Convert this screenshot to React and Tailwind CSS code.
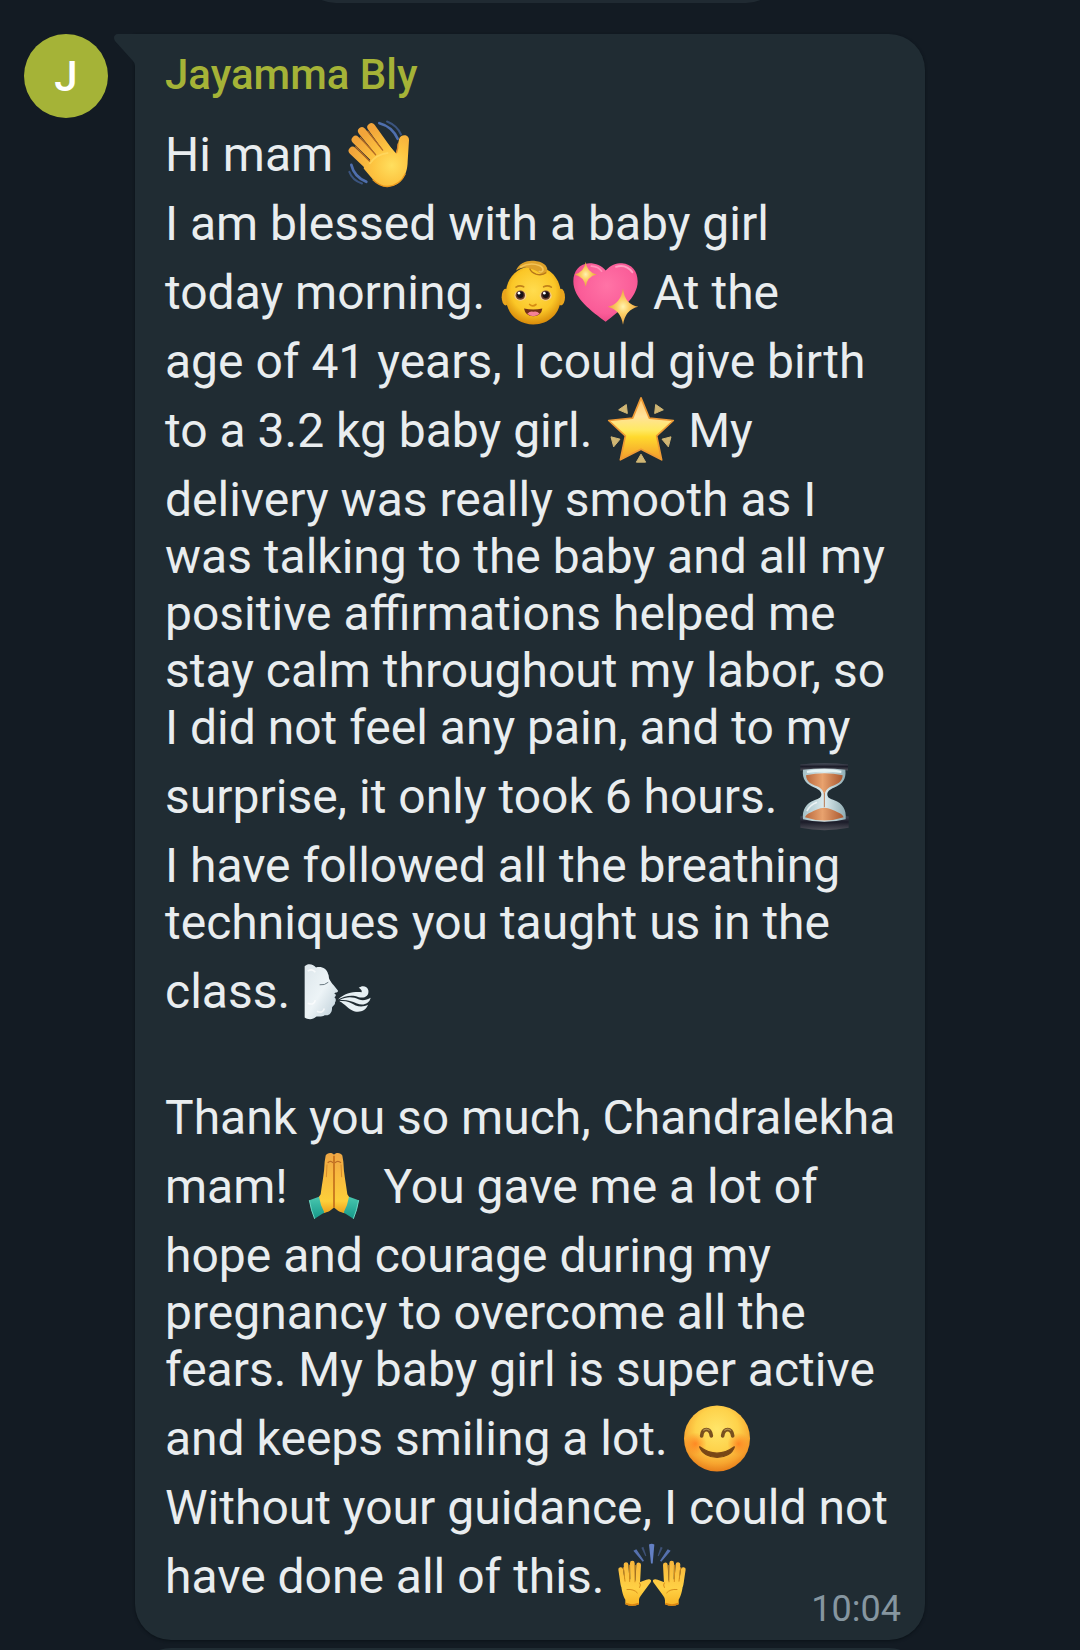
import React from 'react';

const EMOJI = 'inline-block h-[81px] w-[72px] align-[-24px]';

function Emoji({ label, viewBox, children }) {
  return (
    <svg className={EMOJI} viewBox={viewBox} role="img" aria-label={label}>
      {children}
    </svg>
  );
}

function WavingHand() {
  return (
    <Emoji label="waving hand" viewBox="45 24 216 216">
      <defs>
        <radialGradient id="wave-skin" gradientUnits="userSpaceOnUse" cx="185" cy="165" r="125">
          <stop offset="0" stopColor="#ffdf5e" />
          <stop offset="0.45" stopColor="#fdc440" />
          <stop offset="1" stopColor="#f2a43a" />
        </radialGradient>
      </defs>
      <g fill="none" strokeLinecap="round">
        <path d="M148 38Q187 48 203 85" stroke="#4f6fae" strokeWidth="8" />
        <path d="M171 33Q201 45 213 72" stroke="#3b547f" strokeWidth="6" />
        <path d="M64 163Q72 198 109 214" stroke="#4f6fae" strokeWidth="8" />
        <path d="M58 184Q67 209 96 219" stroke="#3b547f" strokeWidth="6" />
      </g>
      <g stroke="url(#wave-skin)" strokeWidth="24" strokeLinecap="round">
        <path d="M68 121L125 175" />
        <path d="M77 88L145 155" />
        <path d="M96 62L160 140" />
        <path d="M124 50L180 128" />
      </g>
      <path
        d="M103 165L172 100L198 128C203 113 204 98 207 87C211 70 238 70 237 89L233 152C232 197 211 228 171 228C145 228 127 206 101 174Z"
        fill="url(#wave-skin)"
      />
      <g fill="none" stroke="#b66b24" strokeWidth="4" strokeLinecap="round">
        <path d="M113 62L158 119" />
        <path d="M91 81L137 133" />
        <path d="M77 109L119 152" />
      </g>
      <path d="M199 128Q204 115 204 99" fill="none" stroke="#d8862c" strokeWidth="4" />
      <path d="M119 160Q137 131 175 127" fill="none" stroke="#ffdc66" strokeWidth="5" opacity="0.7" />
      <path d="M128 207Q150 229 173 228Q210 225 226 190" fill="none" stroke="#ea981e" strokeWidth="4" />
    </Emoji>
  );
}

function Baby() {
  return (
    <Emoji label="baby" viewBox="21 18 216 216">
      <defs>
        <radialGradient id="baby-face" gradientUnits="userSpaceOnUse" cx="130" cy="120" r="102">
          <stop offset="0" stopColor="#ffdc4f" />
          <stop offset="0.65" stopColor="#fbc727" />
          <stop offset="1" stopColor="#d88a0a" />
        </radialGradient>
      </defs>
      <ellipse cx="47" cy="140" rx="12" ry="25" fill="#e9a51d" />
      <ellipse cx="213" cy="140" rx="12" ry="25" fill="#e9a51d" />
      <path
        d="M130 47C180 47 213 84 213 136C213 190 176 222 130 222C84 222 47 190 47 136C47 84 80 47 130 47Z"
        fill="url(#baby-face)"
      />
      <path
        d="M78 60C88 36 112 29 132 31C156 33 174 45 172 60C170 72 150 74 144 64C139 60 128 56 118 53C104 48 92 52 78 60Z"
        fill="#dda12b"
      />
      <path d="M90 50Q120 34 148 45Q160 50 159 59Q155 68 146 62" fill="none" stroke="#f3c457" strokeWidth="5" />
      <path d="M119 54Q124 66 138 71Q157 76 169 66" fill="none" stroke="#b7761a" strokeWidth="4" />
      <g fill="none" stroke="#c1821a" strokeWidth="5" strokeLinecap="round">
        <path d="M78 110Q89 103 101 109" />
        <path d="M161 109Q173 103 184 110" />
      </g>
      <ellipse cx="91" cy="136" rx="18" ry="15" fill="#f4cf96" />
      <ellipse cx="167" cy="136" rx="18" ry="15" fill="#f4cf96" />
      <circle cx="91" cy="134" r="14" fill="#6b3f2a" />
      <circle cx="167" cy="134" r="14" fill="#6b3f2a" />
      <circle cx="91" cy="133" r="10" fill="#171016" />
      <circle cx="167" cy="133" r="10" fill="#171016" />
      <circle cx="87" cy="128" r="4" fill="#fff" />
      <circle cx="163" cy="128" r="4" fill="#fff" />
      <path d="M119 162Q128 170 138 162" fill="none" stroke="#d78c13" strokeWidth="5" strokeLinecap="round" />
      <path d="M102 174Q130 180 157 174Q154 197 130 197Q106 197 102 174Z" fill="#713016" />
      <path d="M112 190Q121 180 130 184Q140 180 149 190Q140 197 130 197Q119 197 112 190Z" fill="#f58197" />
    </Emoji>
  );
}

function SparklingHeart() {
  return (
    <Emoji label="sparkling heart" viewBox="236 18 216 216">
      <defs>
        <radialGradient id="heart-pink" gradientUnits="userSpaceOnUse" cx="350" cy="105" r="120">
          <stop offset="0" stopColor="#ff73a6" />
          <stop offset="0.7" stopColor="#fa5c98" />
          <stop offset="1" stopColor="#e64380" />
        </radialGradient>
        <radialGradient id="heart-spark">
          <stop offset="0" stopColor="#fff3b0" />
          <stop offset="0.4" stopColor="#fdd067" />
          <stop offset="1" stopColor="#e89f3a" />
        </radialGradient>
      </defs>
      <path
        d="M346 60C361 43 377 38 395 38C424 40 442 62 442 92C442 143 386 181 346 214C304 181 249 145 249 92C249 61 268 39 297 38C317 38 334 45 346 60Z"
        fill="url(#heart-pink)"
      />
      <path d="M377 49Q407 40 426 65" fill="none" stroke="#ffa0c2" strokeWidth="6" strokeLinecap="round" />
      <path d="M303 47Q324 48 334 62" fill="none" stroke="#ff94ba" strokeWidth="5" strokeLinecap="round" />
      <path d="M286 34Q289 65 319 72Q290 78 286 109Q282 79 253 72Q283 64 286 34Z" fill="url(#heart-spark)" />
      <path d="M398 114Q403 162 444 169Q405 177 398 223Q391 178 352 169Q391 161 398 114Z" fill="url(#heart-spark)" />
    </Emoji>
  );
}

function GlowingStar() {
  return (
    <Emoji label="glowing star" viewBox="12 12 216 216">
      <defs>
        <linearGradient id="star-fill" x1="0" y1="0" x2="0" y2="1">
          <stop offset="0" stopColor="#ffc56a" />
          <stop offset="0.3" stopColor="#ffe29a" />
          <stop offset="0.52" stopColor="#ffe962" />
          <stop offset="0.63" stopColor="#ffda2e" />
          <stop offset="1" stopColor="#f39a2c" />
        </linearGradient>
      </defs>
      <g fill="#d0b674" stroke="#d0b674" strokeWidth="3" strokeLinejoin="round">
        <path d="M79 42L56 58L82 69Z" />
        <path d="M167 42L190 58L164 69Z" />
        <path d="M33 139L60 146L41 169Z" />
        <path d="M213 139L186 146L205 169Z" />
        <path d="M123 191L109 215H137Z" />
      </g>
      <path
        d="M123 22L148 83L220 90L170 136L185 208L123 176L61 208L76 136L26 90L98 83Z"
        fill="url(#star-fill)"
        stroke="#ee9a35"
        strokeWidth="5"
        strokeLinejoin="round"
      />
    </Emoji>
  );
}

function Hourglass() {
  return (
    <Emoji label="hourglass" viewBox="26 30 216 216">
      <defs>
        <linearGradient id="glass-sand" x1="0" x2="1">
          <stop offset="0" stopColor="#b9683d" />
          <stop offset="0.45" stopColor="#e8a26e" />
          <stop offset="1" stopColor="#a95730" />
        </linearGradient>
        <linearGradient id="glass-body" x1="0" x2="1">
          <stop offset="0" stopColor="#a5c0c6" />
          <stop offset="0.5" stopColor="#dcebee" />
          <stop offset="1" stopColor="#8facb3" />
        </linearGradient>
        <linearGradient id="glass-cap" x1="0" y1="0" x2="0" y2="1">
          <stop offset="0" stopColor="#4b505d" />
          <stop offset="0.45" stopColor="#1b1c29" />
          <stop offset="1" stopColor="#4f5059" />
        </linearGradient>
      </defs>
      <path d="M60 42Q132 35 203 42V60Q132 54 60 60Z" fill="url(#glass-cap)" />
      <path d="M60 198Q132 190 205 198V232Q132 246 60 232Z" fill="url(#glass-cap)" />
      <path
        d="M68 58Q132 50 195 58C199 88 184 102 162 111C146 118 141 124 141 131C141 139 146 144 162 149C186 158 199 176 196 206Q132 222 68 206C65 176 78 158 102 149C118 144 123 139 123 131C123 124 118 118 102 111C80 102 64 88 68 58Z"
        fill="url(#glass-body)"
      />
      <path d="M77 74Q132 62 187 74C186 94 172 100 154 107C139 113 135 122 132 134C129 122 125 113 110 107C92 100 78 94 77 74Z" fill="url(#glass-sand)" />
      <path d="M74 200C80 188 96 184 110 177Q131 166 154 177C168 184 185 188 190 200Q132 220 74 200Z" fill="url(#glass-sand)" />
      <path d="M132 128V170" stroke="#b77850" strokeWidth="3" />
      <path d="M80 64Q132 56 183 64" stroke="#e6f3f4" strokeWidth="7" fill="none" />
      <path d="M80 182Q87 164 110 155" stroke="#fff" strokeWidth="5" fill="none" opacity="0.7" />
    </Emoji>
  );
}

function WindFace() {
  return (
    <Emoji label="wind face" viewBox="37 17 216 216">
      <defs>
        <linearGradient id="wind-cloud" x1="0" y1="0" x2="1" y2="1">
          <stop offset="0" stopColor="#dce6eb" />
          <stop offset="0.5" stopColor="#edf4f7" />
          <stop offset="1" stopColor="#b9cbd5" />
        </linearGradient>
      </defs>
      <path
        d="M45 49C54 39 72 42 79 53C94 48 112 56 115 72C119 78 116 84 120 90C125 100 139 114 145 123C146 128 137 128 134 131C140 134 140 139 134 142C139 146 140 152 136 158C137 164 130 166 127 173C128 189 119 199 105 196C95 203 84 198 79 201C71 210 54 210 45 203Z"
        fill="url(#wind-cloud)"
      />
      <path d="M91 105Q105 107 115 98" stroke="#6b7a82" strokeWidth="3" fill="none" strokeLinecap="round" />
      <path d="M54 64Q68 55 77 67M54 160Q73 168 77 151M82 184Q99 193 104 176" stroke="#fff" strokeWidth="5" fill="none" opacity="0.7" />
      <g fill="#e7f0f4">
        <path d="M145 149C165 129 194 125 216 127C218 122 212 117 207 114C218 105 233 109 236 121C239 139 224 146 207 142C184 133 165 140 145 149Z" />
        <path d="M149 151C172 139 190 141 208 149C219 153 231 151 243 144C239 162 220 169 202 161C184 153 170 149 149 151Z" />
        <path d="M149 154C170 152 183 158 198 167C210 172 224 171 235 165C229 182 211 190 193 184C176 178 166 162 149 154Z" />
      </g>
    </Emoji>
  );
}

function FoldedHands() {
  return (
    <Emoji label="folded hands" viewBox="14 32 216 216">
      <defs>
        <linearGradient id="pray-skin" x1="0" y1="0" x2="0" y2="1">
          <stop offset="0" stopColor="#eda645" />
          <stop offset="0.35" stopColor="#f8b93f" />
          <stop offset="0.8" stopColor="#fdcf3a" />
          <stop offset="1" stopColor="#eca01d" />
        </linearGradient>
        <linearGradient id="pray-cuff" x1="0" y1="0" x2="0" y2="1">
          <stop offset="0" stopColor="#49c7af" />
          <stop offset="1" stopColor="#159889" />
        </linearGradient>
      </defs>
      <path
        d="M116 45C111 37 95 38 91 47L88 66C87 100 80 132 76 163L67 177L82 220C98 218 110 209 116 202Z"
        fill="url(#pray-skin)"
      />
      <path
        d="M116 45C121 37 137 38 141 47L144 66C145 100 152 132 156 163L165 177L150 220C134 218 122 209 116 202Z"
        fill="url(#pray-skin)"
      />
      <path d="M116 48V203" stroke="#c36f1c" strokeWidth="5" />
      <path d="M97 69Q106 60 113 69M119 69Q127 60 137 69" fill="none" stroke="#bd6e27" strokeWidth="4" />
      <path d="M95 74L93 112M137 74L139 112" stroke="#d68c2d" strokeWidth="3" />
      <path d="M42 181L71 171Q75 197 87 218L58 237Q46 211 42 181Z" fill="url(#pray-cuff)" />
      <path d="M190 181L161 171Q157 197 145 218L174 237Q186 211 190 181Z" fill="url(#pray-cuff)" />
      <path d="M42 181Q47 211 58 237M190 181Q185 211 174 237" fill="none" stroke="#6bd8c4" strokeWidth="3" />
    </Emoji>
  );
}

function SmilingFace() {
  return (
    <Emoji label="smiling face" viewBox="30 24 216 216">
      <defs>
        <radialGradient id="smile-face" gradientUnits="userSpaceOnUse" cx="141" cy="105" r="128">
          <stop offset="0" stopColor="#ffe66a" />
          <stop offset="0.5" stopColor="#fed24b" />
          <stop offset="0.8" stopColor="#f7a52f" />
          <stop offset="1" stopColor="#e67c19" />
        </radialGradient>
        <radialGradient id="smile-blush">
          <stop offset="0" stopColor="#ff761a" stopOpacity="0.75" />
          <stop offset="1" stopColor="#ff761a" stopOpacity="0" />
        </radialGradient>
      </defs>
      <circle cx="141" cy="132" r="99" fill="url(#smile-face)" />
      <circle cx="76" cy="148" r="34" fill="url(#smile-blush)" />
      <circle cx="206" cy="148" r="34" fill="url(#smile-blush)" />
      <g fill="none" stroke="#78501f" strokeLinecap="round">
        <path d="M95 124C97 99 121 99 124 124" strokeWidth="11" />
        <path d="M158 124C161 99 185 99 188 124" strokeWidth="11" />
      </g>
      <path d="M89 157Q141 195 193 157C181 199 102 199 89 157Z" fill="#784716" stroke="#784716" strokeWidth="4" strokeLinejoin="round" />
      <path d="M100 108Q109 100 119 108M163 108Q173 100 183 108" fill="none" stroke="#b49354" strokeWidth="4" />
    </Emoji>
  );
}

function RaisedHand() {
  return (
    <>
      <g stroke="url(#raise-skin)" strokeWidth="14" strokeLinecap="round">
        <path d="M62 118L69 164" />
        <path d="M78 103L82 158" />
        <path d="M97 99L98 158" />
        <path d="M116 104L113 160" />
      </g>
      <path
        d="M62 147Q91 143 119 156L139 149C148 145 157 149 152 156L130 186C122 198 117 201 117 211V222Q96 232 76 222V209C68 195 63 174 62 147Z"
        fill="url(#raise-skin)"
      />
      <g fill="none" stroke="#d88e1b" strokeWidth="3" strokeLinecap="round">
        <path d="M70 112L75 153M88 105L89 154M106 106L105 155" />
        <path d="M81 178Q102 176 112 188M119 158Q124 164 119 172" />
      </g>
      <path d="M77 220Q96 229 116 220" fill="none" stroke="#da8412" strokeWidth="5" />
    </>
  );
}

function RaisingHands() {
  return (
    <Emoji label="raising hands" viewBox="48 31 216 216">
      <defs>
        <linearGradient id="raise-skin" gradientUnits="userSpaceOnUse" x1="0" y1="90" x2="0" y2="230">
          <stop offset="0" stopColor="#f7b53b" />
          <stop offset="0.6" stopColor="#ffd145" />
          <stop offset="1" stopColor="#f8b222" />
        </linearGradient>
      </defs>
      <path d="M147 43Q155 39 163 43L158 100H153Z" fill="#6380c4" />
      <path d="M100 62L109 57L132 92L128 95ZM212 62L203 57L180 92L184 95Z" fill="#5570ad" />
      <path d="M124 53L130 50L139 77L136 78ZM188 53L182 50L173 77L176 78Z" fill="#3e5175" />
      <RaisedHand />
      <g transform="translate(312 0) scale(-1 1)">
        <RaisedHand />
      </g>
    </Emoji>
  );
}

export default function App() {
  return (
    <main className="flex min-h-screen flex-col bg-[#131b23] font-['Roboto',sans-serif]">
      {/* Previous message, scrolled almost out of view */}
      <div className="ml-[300px] mr-[298px] flex h-[3px] items-end overflow-hidden">
        <div className="h-20 w-full shrink-0 rounded-[36px] bg-[#202a32]"></div>
      </div>

      <article className="mt-[31px] flex items-start pl-6 pr-[155px]">
        <div className="flex size-[84px] shrink-0 items-center justify-center rounded-full bg-[#a5b337] pt-0.5 text-[42px] font-medium leading-none text-white">
          J
        </div>

        <div className="relative ml-[27px] flex min-w-0 flex-1 flex-col rounded-[36px] rounded-tl-none bg-[#202c33] px-[30px] pb-[11px] pt-4 shadow-[0_1px_3px_#0b1218]">
          <svg className="absolute -left-[21px] top-0 h-8 w-[22px]" viewBox="0 0 22 32" aria-hidden="true">
            <path d="M22 0H4C0 0-1 4 1 7L19 27Q21 29 21 32H22Z" fill="#202c33" />
          </svg>

          <h2 className="text-[42px] font-medium leading-[50px] text-[#a5b337]">Jayamma Bly</h2>

          <p className="mt-3.5 whitespace-nowrap text-5xl leading-[57px] text-[#e9edef]">
            Hi mam <WavingHand /><br />
            I am blessed with a baby girl<br />
            today morning. <Baby /><SparklingHeart /> At the<br />
            age of 41 years, I could give birth<br />
            to a 3.2 kg baby girl. <GlowingStar /> My<br />
            delivery was really smooth as I<br />
            was talking to the baby and all my<br />
            positive affirmations helped me<br />
            stay calm throughout my labor, so<br />
            I did not feel any pain, and to my<br />
            surprise, it only took 6 hours. <Hourglass /><br />
            I have followed all the breathing<br />
            techniques you taught us in the<br />
            class. <WindFace /><br />
            <br />
            Thank you so much, Chandralekha<br />
            mam! <FoldedHands /> You gave me a lot of<br />
            hope and courage during my<br />
            pregnancy to overcome all the<br />
            fears. My baby girl is super active<br />
            and keeps smiling a lot. <SmilingFace /><br />
            Without your guidance, I could not<br />
            have done all of this. <RaisingHands />
          </p>

          <time className="-mr-1.5 -mt-7 self-end text-4xl leading-10 text-[#8696a0]" dateTime="10:04">
            10:04
          </time>
        </div>
      </article>

      {/* Top edge of the next message */}
      <div className="ml-[135px] mr-[155px] mt-2 h-[2px] overflow-hidden">
        <div className="h-20 rounded-[36px] bg-[#202c33]"></div>
      </div>
    </main>
  );
}
